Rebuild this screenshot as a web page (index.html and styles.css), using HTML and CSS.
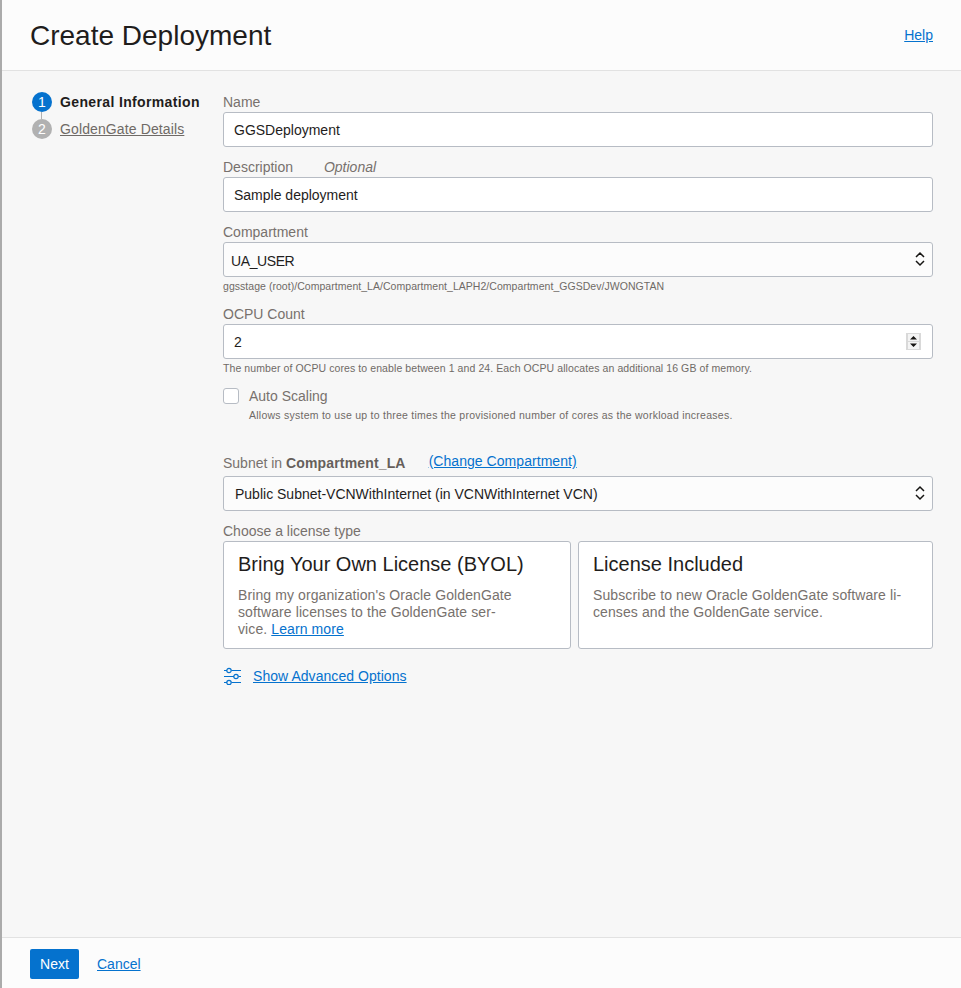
FILE: index.html
```html
<!DOCTYPE html>
<html lang="en">
<head>
  <meta charset="UTF-8" />
  <meta name="viewport" content="width=device-width, initial-scale=1.0" />
  <title>Create Deployment</title>
  <link rel="stylesheet" href="styles.css">
</head>
<body>
  <div class="panel">
    <header class="panel-head">
      <h1>Create Deployment</h1>
      <a href="#" class="link help">Help</a>
    </header>

    <main class="panel-body">
      <ol class="steps">
        <li class="step active"><span class="step-num">1</span><span class="step-name">General Information</span></li>
        <li class="step"><span class="step-num">2</span><a href="#" class="step-name">GoldenGate Details</a></li>
      </ol>

      <form class="form">
        <div class="field">
          <label for="name">Name</label>
          <input type="text" id="name" value="GGSDeployment" />
        </div>

        <div class="field">
          <label for="description">Description <em class="optional">Optional</em></label>
          <input type="text" id="description" value="Sample deployment" />
        </div>

        <div class="field">
          <label for="compartment">Compartment</label>
          <div class="control-wrap">
            <select id="compartment" class="select-compartment"><option>UA_USER</option></select>
            <svg class="chevrons" width="10" height="16" viewBox="0 0 10 16"><path d="M1 6l4-4 4 4M1 10l4 4 4-4" fill="none" stroke="#161513" stroke-width="1.5"/></svg>
          </div>
          <p class="hint hint-path">ggsstage (root)/Compartment_LA/Compartment_LAPH2/Compartment_GGSDev/JWONGTAN</p>
        </div>

        <div class="field">
          <label for="ocpu">OCPU Count</label>
          <div class="control-wrap">
            <input type="number" id="ocpu" class="input-count" value="2" min="1" max="24" />
            <svg class="spinner" width="15" height="17" viewBox="0 0 15 17">
              <rect width="15" height="17" fill="#d9d9d9"/>
              <rect x="2" y="1" width="11" height="7" fill="#f4f4f4"/>
              <rect x="2" y="9" width="11" height="7" fill="#f4f4f4"/>
              <path d="M7.500 3l3.500 3.500H4zM4 10.500h7L7.500 14z" fill="#161513"/>
            </svg>
          </div>
          <p class="hint">The number of OCPU cores to enable between 1 and 24. Each OCPU allocates an additional 16 GB of memory.</p>
        </div>

        <div class="check-row">
          <input type="checkbox" id="scaling" class="check" />
          <div>
            <label for="scaling" class="check-label">Auto Scaling</label>
            <p class="hint hint-wide">Allows system to use up to three times the provisioned number of cores as the workload increases.</p>
          </div>
        </div>

        <div class="field subnet">
          <div class="subnet-label">
            <label for="subnet">Subnet in <strong>Compartment_LA</strong></label>
            <a href="#" class="link">(Change Compartment)</a>
          </div>
          <div class="control-wrap">
            <select id="subnet"><option>Public Subnet-VCNWithInternet (in VCNWithInternet VCN)</option></select>
            <svg class="chevrons" width="10" height="16" viewBox="0 0 10 16"><path d="M1 6l4-4 4 4M1 10l4 4 4-4" fill="none" stroke="#161513" stroke-width="1.5"/></svg>
          </div>
        </div>

        <div class="field">
          <span class="label">Choose a license type</span>
          <div class="licenses">
            <div class="license byol">
              <h2>Bring Your Own License (BYOL)</h2>
              <p>Bring my organization's Oracle GoldenGate<br>software licenses to the GoldenGate ser-<br>vice. <a href="#" class="link">Learn more</a></p>
            </div>
            <div class="license included">
              <h2>License Included</h2>
              <p>Subscribe to new Oracle GoldenGate software li-<br>censes and the GoldenGate service.</p>
            </div>
          </div>
        </div>

        <div class="advanced">
          <svg width="18" height="18" viewBox="0 0 18 18" fill="none" stroke="#0572ce" stroke-width="1.2">
            <path d="M1 3.500h3M8.500 3.500h9.500M1 9.500h10M15.500 9.500h2.500M1 15.500h3M8.500 15.500h9.500"/>
            <circle cx="6" cy="3.500" r="2.200"/><circle cx="13" cy="9.500" r="2.200"/><circle cx="6" cy="15.500" r="2.200"/>
          </svg>
          <a href="#" class="link">Show Advanced Options</a>
        </div>
      </form>
    </main>

    <footer class="panel-foot">
      <button type="button" class="btn-next">Next</button>
      <a href="#" class="link">Cancel</a>
    </footer>
  </div>
</body>
</html>
```

FILE: styles.css
```css
* {
  box-sizing: border-box;
}
body {
  margin: 0;
  font-family: "Liberation Sans", Arial, sans-serif;
  font-size: 14px;
  color: #1f1d1c;
  background-color: #f7f7f7;
}
.panel {
  height: 988px;
  display: flex;
  flex-direction: column;
  border-left: 2px solid #ababab;
}
.link {
  color: #0572ce;
}
.panel-head {
  height: 71px;
  flex: none;
  display: flex;
  justify-content: space-between;
  align-items: center;
  padding: 1px 28px 0;
  background-color: #fcfcfc;
  border-bottom: 1px solid #e2e2e2;
}
.panel-head h1 {
  margin: 0;
  font-size: 28px;
  font-weight: normal;
  line-height: 34px;
}
.help {
  margin-bottom: 2px;
}
.panel-body {
  flex: 1;
  display: flex;
  padding: 21px 28px 0 30px;
}
.steps {
  width: 191px;
  flex: none;
  margin: 0;
  padding: 0;
  list-style: none;
}
.step {
  display: flex;
  align-items: center;
  height: 20px;
  margin-bottom: 7px;
  position: relative;
}
.step-num {
  width: 20px;
  height: 20px;
  margin-right: 8px;
  border-radius: 50%;
  background-color: #b1b1b1;
  color: #fff;
  font-size: 14px;
  line-height: 20px;
  text-align: center;
}
.step.active .step-num {
  background-color: #0572ce;
}
.step.active::after {
  content: "";
  position: absolute;
  left: 9px;
  top: 20px;
  width: 1px;
  height: 7px;
  background-color: #b1b1b1;
}
.step-name {
  color: #6f6a66;
  letter-spacing: 0.12px;
}
.step.active .step-name {
  color: #1f1d1c;
  font-weight: bold;
  letter-spacing: 0.36px;
}
.form {
  flex: 1;
  min-width: 0;
}
.field {
  margin-bottom: 10px;
}
label, .label {
  display: block;
  height: 20px;
  line-height: 20px;
  color: #77716d;
}
.optional {
  margin-left: 27px;
}
input[type="text"], input[type="number"], select {
  display: block;
  width: 100%;
  height: 35px;
  padding: 0 10px;
  border: 1px solid #b7bcc4;
  border-radius: 3px;
  background-color: #fff;
  color: #1f1d1c;
  font-family: inherit;
  font-size: 14px;
}
.input-count::-webkit-inner-spin-button {
  appearance: none;
}
.control-wrap {
  position: relative;
}
select {
  appearance: none;
  background-color: #fcfcfc;
  padding-left: 11px;
}
.select-compartment {
  padding-left: 7px;
  padding-top: 2px;
  letter-spacing: -0.4px;
}
.chevrons {
  position: absolute;
  right: 8px;
  top: 9px;
  pointer-events: none;
}
.spinner {
  position: absolute;
  right: 12px;
  top: 9px;
}
.hint {
  margin: 2px 0 0;
  padding-bottom: 1px;
  font-size: 10.5px;
  line-height: 14px;
  letter-spacing: 0.09px;
  color: #6f6a66;
}
.hint-path {
  letter-spacing: 0.04px;
}
.hint-wide {
  letter-spacing: 0.25px;
}
.check-row {
  display: flex;
}
.check {
  appearance: none;
  width: 16px;
  height: 16px;
  margin: 2px 10px 0 0;
  border: 1px solid #b7bcc4;
  border-radius: 3px;
  background-color: #fff;
}
.subnet {
  margin-top: 28px;
}
.subnet-label {
  display: flex;
  height: 25px;
  gap: 23px;
}
.subnet-label label {
  padding-top: 2px;
}
.subnet-label strong {
  color: #665f5b;
  letter-spacing: 0.15px;
}
.subnet-label .link {
  line-height: 20px;
  letter-spacing: 0.05px;
}
.licenses {
  display: flex;
  gap: 7px;
}
.license {
  height: 108px;
  padding: 10px 14px;
  border: 1px solid #b7bcc4;
  border-radius: 3px;
  background-color: #fff;
}
.byol {
  width: 348px;
}
.included {
  flex: 1;
}
.license h2 {
  margin: 0 0 11px;
  font-size: 20px;
  font-weight: normal;
  line-height: 24px;
}
.license p {
  margin: 0;
  line-height: 17px;
  letter-spacing: 0.1px;
  color: #77716d;
}
.advanced {
  display: flex;
  align-items: center;
  gap: 12px;
  margin-top: 18px;
}
.advanced .link {
  letter-spacing: 0.05px;
}
.panel-foot {
  height: 51px;
  flex: none;
  display: flex;
  align-items: center;
  gap: 18px;
  padding: 2px 28px 0;
  background-color: #fcfcfc;
  border-top: 1px solid #e2e2e2;
}
.btn-next {
  width: 49px;
  height: 30px;
  padding: 0;
  border: none;
  border-radius: 2px;
  background-color: #0572ce;
  color: #fff;
  font-family: inherit;
  font-size: 14px;
}
```
